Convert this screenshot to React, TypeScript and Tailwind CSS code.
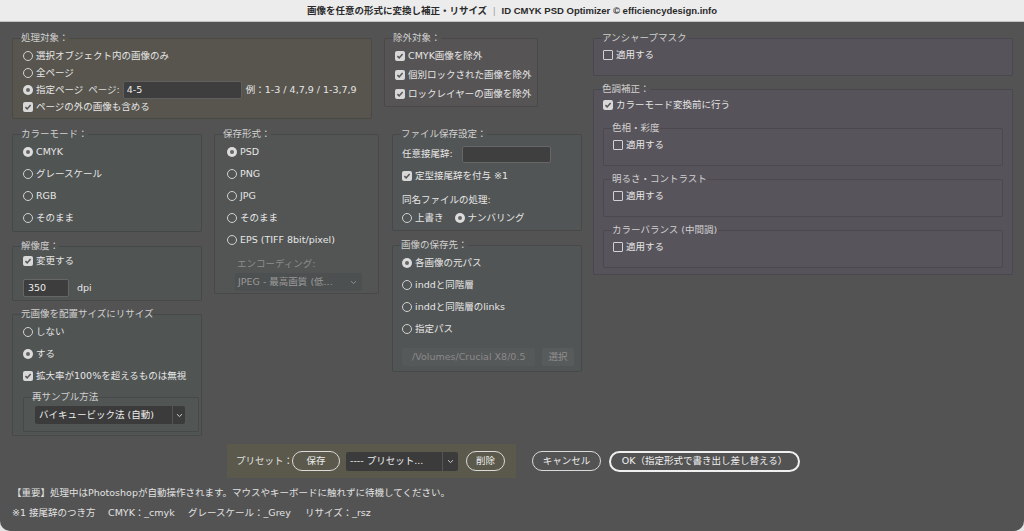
import React from "react";

const Radio = ({ on = false }: { on?: boolean }) =>
  on ? (
    <span className="flex h-[10px] w-[10px] shrink-0 items-center justify-center rounded-full bg-[#dcdcdc]">
      <span className="h-[4px] w-[4px] rounded-full bg-[#666666]" />
    </span>
  ) : (
    <span className="h-[10px] w-[10px] shrink-0 rounded-full border border-[#d2d2d2]" />
  );

const Check = ({ on = false }: { on?: boolean }) =>
  on ? (
    <span className="flex h-[10px] w-[10px] shrink-0 items-center justify-center rounded-[2px] bg-[#d8d8d8]">
      <svg width="8" height="8" viewBox="0 0 8 8">
        <path d="M1.4 4.1 L3.2 5.9 L6.6 1.9" stroke="#565656" strokeWidth="1.5" fill="none" />
      </svg>
    </span>
  ) : (
    <span className="h-[10px] w-[10px] shrink-0 rounded-[1px] border border-[#d2d2d2]" />
  );

const Opt = ({
  children,
  radio = false,
  on = false,
  className = "",
}: {
  children: React.ReactNode;
  radio?: boolean;
  on?: boolean;
  className?: string;
}) => (
  <div className={`flex items-center gap-[3px] ${className}`}>
    {radio ? <Radio on={on} /> : <Check on={on} />}
    <span className="whitespace-nowrap">{children}</span>
  </div>
);

const Box = ({
  title,
  className = "",
  pad = "",
  children,
}: {
  title: string;
  className?: string;
  pad?: string;
  children: React.ReactNode;
}) => (
  <fieldset className={`min-w-0 rounded-[2px] border border-[#00000022] ${className}`}>
    <legend className="ml-[8px] whitespace-nowrap leading-[14px] text-[#d0d0d0]">{title}</legend>
    <div className={pad}>{children}</div>
  </fieldset>
);

const Chevron = ({ color = "#cfcfcf" }: { color?: string }) => (
  <svg width="7" height="5" viewBox="0 0 7 5">
    <path d="M1 1.2 L3.5 3.6 L6 1.2" stroke={color} strokeWidth="1" fill="none" />
  </svg>
);

const Pill = ({ children, className = "" }: { children: React.ReactNode; className?: string }) => (
  <div
    className={`flex h-[20px] items-center justify-center rounded-full border-[1.5px] border-[#dadada] text-[#ececec] ${className}`}
  >
    {children}
  </div>
);

export default function App() {
  return (
    <div className="h-[531px] w-[1024px] bg-[#e4e4e4] font-['DejaVu_Sans','Noto_Sans_CJK_JP',sans-serif] text-[9.5px] leading-[14px] text-[#e6e6e6]">
      <div className="flex h-full flex-col overflow-hidden rounded-b-[10px] bg-[#535353]">
        {/* title bar */}
        <div className="flex h-[22px] shrink-0 items-center justify-center border-b border-[#c2c2c2] bg-[#ececec] font-['Liberation_Sans','Noto_Sans_CJK_JP',sans-serif] text-[9.5px] font-bold text-[#2a2a2a]">
          <span>画像を任意の形式に変換し補正・リサイズ</span>
          <span className="mx-[6px] font-normal text-[#a0a0a0]">|</span>
          <span>ID CMYK PSD Optimizer © efficiencydesign.info</span>
        </div>

        {/* main */}
        <div className="flex h-[422px] shrink-0 px-[12px] pt-[9px]">
          {/* left area */}
          <div className="w-[570px] shrink-0">
            <div className="flex items-start gap-[12px]">
              <Box title="処理対象：" className="w-[360px] bg-[#57554e]" pad="pl-[10px] pt-[2px] pb-[4px]">
                <Opt radio className="h-[17px]">選択オブジェクト内の画像のみ</Opt>
                <Opt radio className="h-[17px]">全ページ</Opt>
                <div className="flex h-[18px] items-center">
                  <Opt radio on>指定ページ</Opt>
                  <span className="ml-[5px] text-[#dcdcdc]">ページ:</span>
                  <div className="ml-[3px] flex h-[18px] w-[119px] items-center rounded-[2px] border border-[#5f5f5f] bg-[#3e3e3e] pl-[3px] text-[#ececec]">
                    4-5
                  </div>
                  <span className="ml-[4px] whitespace-nowrap">例：1-3 / 4,7,9 / 1-3,7,9</span>
                </div>
                <Opt on className="h-[15px]">ページの外の画像も含める</Opt>
              </Box>

              <Box title="除外対象：" className="w-[154px] bg-[#565455]" pad="pl-[10px] pt-[1px] pb-[3px]">
                <Opt on className="h-[19px]">CMYK画像を除外</Opt>
                <Opt on className="h-[19px]">個別ロックされた画像を除外</Opt>
                <Opt on className="h-[19px]">ロックレイヤーの画像を除外</Opt>
              </Box>
            </div>

            <div className="mt-[8px] flex items-start">
              {/* column 1 */}
              <div className="w-[190px] shrink-0">
                <Box title="カラーモード：" className="bg-[#505453]" pad="pl-[10px] pb-[2px]">
                  <Opt radio on className="h-[22px]">CMYK</Opt>
                  <Opt radio className="h-[22px]">グレースケール</Opt>
                  <Opt radio className="h-[22px]">RGB</Opt>
                  <Opt radio className="h-[22px]">そのまま</Opt>
                </Box>

                <Box title="解像度：" className="mt-[7px] bg-[#505453]" pad="pl-[10px] pb-[3px]">
                  <Opt on className="h-[16px]">変更する</Opt>
                  <div className="mt-[10px] flex h-[18px] items-center">
                    <div className="flex h-[18px] w-[46px] items-center rounded-[2px] border border-[#666666] bg-[#3d3d3d] pl-[4px] text-[#ececec]">
                      350
                    </div>
                    <span className="ml-[8px]">dpi</span>
                  </div>
                </Box>

                <Box title="元画像を配置サイズにリサイズ" className="mt-[6px] bg-[#505453]" pad="pl-[10px] pb-[3px]">
                  <Opt radio className="h-[22px]">しない</Opt>
                  <Opt radio on className="h-[22px]">する</Opt>
                  <Opt on className="h-[22px]">拡大率が100%を超えるものは無視</Opt>
                  <Box title="再サンプル方法" className="mt-[3px] w-[176px] bg-[#515554]" pad="pl-[11px] pt-[2px] pb-[7px]">
                    <div className="flex h-[18px] w-[150px] items-center rounded-[2px] bg-[#3b3b3b]">
                      <span className="flex-1 pl-[4px] text-[#ececec]">バイキュービック法 (自動)</span>
                      <span className="flex h-full w-[13px] items-center justify-center border-l border-[#555]">
                        <Chevron />
                      </span>
                    </div>
                  </Box>
                </Box>
              </div>

              {/* column 2 */}
              <div className="ml-[12px] w-[165px] shrink-0">
                <Box title="保存形式：" className="bg-[#525554]" pad="pl-[12px] pb-[2px]">
                  <Opt radio on className="h-[22px]">PSD</Opt>
                  <Opt radio className="h-[22px]">PNG</Opt>
                  <Opt radio className="h-[22px]">JPG</Opt>
                  <Opt radio className="h-[22px]">そのまま</Opt>
                  <Opt radio className="h-[22px]">EPS (TIFF 8bit/pixel)</Opt>
                  <div className="ml-[10px] mt-[6px] h-[14px] text-[#8d8d8d]">エンコーディング:</div>
                  <div className="ml-[8px] mt-[2px] flex h-[18px] w-[127px] items-center rounded-[2px] bg-[#4d5050] text-[#9a9a9a]">
                    <span className="flex-1 whitespace-nowrap pl-[3px]">JPEG - 最高画質 (低...</span>
                    <span className="flex w-[18px] items-center justify-center">
                      <Chevron color="#8f8f8f" />
                    </span>
                  </div>
                </Box>
              </div>

              {/* column 3 */}
              <div className="ml-[13px] w-[190px] shrink-0">
                <Box title="ファイル保存設定：" className="bg-[#525555]" pad="pl-[9px] pb-[4px]">
                  <div className="mt-[4px] flex h-[18px] items-center">
                    <span className="w-[60px] whitespace-nowrap">任意接尾辞:</span>
                    <div className="h-[17px] w-[89px] rounded-[2px] border border-[#666666] bg-[#3f3f3f]" />
                  </div>
                  <Opt on className="mt-[4px] h-[18px]">定型接尾辞を付与 ※1</Opt>
                  <div className="mt-[8px] h-[14px]">同名ファイルの処理:</div>
                  <div className="mt-[3px] flex h-[16px] items-center">
                    <Opt radio>上書き</Opt>
                    <Opt radio on className="ml-[11px]">ナンバリング</Opt>
                  </div>
                </Box>

                <Box title="画像の保存先：" className="mt-[7px] bg-[#525555]" pad="pl-[9px] pb-[5px]">
                  <Opt radio on className="h-[22px]">各画像の元パス</Opt>
                  <Opt radio className="h-[22px]">inddと同階層</Opt>
                  <Opt radio className="h-[22px]">inddと同階層のlinks</Opt>
                  <Opt radio className="h-[22px]">指定パス</Opt>
                  <div className="mt-[8px] flex h-[18px] items-center">
                    <div className="flex h-[18px] w-[133px] items-center overflow-hidden rounded-[2px] bg-[#565959] pl-[10px] whitespace-nowrap text-[#8a8a8a]">
                      /Volumes/Crucial X8/0.5
                    </div>
                    <div className="ml-[7px] flex h-[18px] w-[32px] items-center justify-center rounded-[2px] bg-[#585b5b] text-[#8e8e8e]">
                      選択
                    </div>
                  </div>
                </Box>
              </div>
            </div>
          </div>

          {/* right area */}
          <div className="ml-[11px] w-[420px] shrink-0">
            <Box title="アンシャープマスク" className="bg-[#57535a]" pad="pl-[9px] pt-[1px] pb-[11px]">
              <Opt className="h-[18px]">適用する</Opt>
            </Box>
            <Box title="色調補正：" className="mt-[6px] bg-[#57535a]" pad="pl-[9px] pr-[9px] pb-[6px]">
              <Opt on className="h-[18px]">カラーモード変換前に行う</Opt>
              <Box title="色相・彩度" className="mt-[7px] bg-[#58545b]" pad="pl-[9px] pt-[1px] pb-[11px]">
                <Opt className="h-[18px]">適用する</Opt>
              </Box>
              <Box title="明るさ・コントラスト" className="mt-[6px] bg-[#58545b]" pad="pl-[9px] pt-[1px] pb-[11px]">
                <Opt className="h-[18px]">適用する</Opt>
              </Box>
              <Box title="カラーバランス (中間調)" className="mt-[6px] bg-[#58545b]" pad="pl-[9px] pt-[1px] pb-[11px]">
                <Opt className="h-[18px]">適用する</Opt>
              </Box>
            </Box>
          </div>
        </div>

        {/* preset row */}
        <div className="flex h-[34px] shrink-0 items-center">
          <div className="ml-[227px] flex h-[34px] w-[289px] items-center bg-[#5a594b] pl-[9px]">
            <span className="w-[56px] whitespace-nowrap text-[#e0e0e0]">プリセット：</span>
            <Pill className="w-[48px]">保存</Pill>
            <div className="ml-[6px] flex h-[19px] w-[112px] items-center rounded-[2px] bg-[#3b3b3b]">
              <span className="flex-1 whitespace-nowrap pl-[4px] text-[#ececec]">---- プリセット...</span>
              <span className="flex h-full w-[16px] items-center justify-center border-l border-[#555]">
                <Chevron />
              </span>
            </div>
            <Pill className="ml-[8px] w-[39px]">削除</Pill>
          </div>
          <Pill className="ml-[16px] w-[69px]">キャンセル</Pill>
          <div className="ml-[8px] flex h-[21px] w-[191px] items-center justify-center rounded-full border-2 border-[#f0f0f0] text-[#f2f2f2]">
            OK（指定形式で書き出し差し替える）
          </div>
        </div>

        {/* footer */}
        <div className="pl-[12px] pt-[8px] text-[#e2e2e2]">
          <div className="h-[14px] whitespace-nowrap">
            【重要】処理中はPhotoshopが自動操作されます。マウスやキーボードに触れずに待機してください。
          </div>
          <div className="mt-[6px] flex h-[14px] whitespace-nowrap">
            <span className="w-[96px]">※1 接尾辞のつき方</span>
            <span className="w-[80px]">CMYK：_cmyk</span>
            <span className="w-[117px]">グレースケール：_Grey</span>
            <span>リサイズ：_rsz</span>
          </div>
        </div>
      </div>
    </div>
  );
}
